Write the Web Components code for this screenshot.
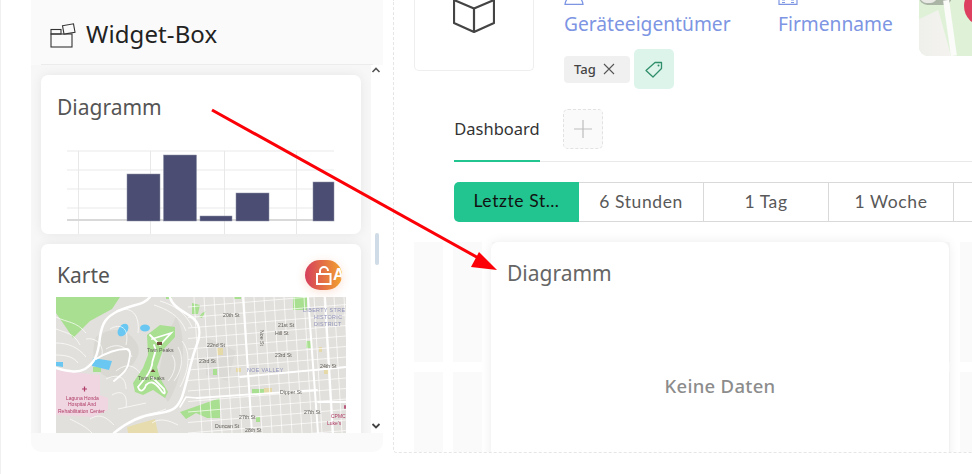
<!DOCTYPE html>
<html lang="de"><head><meta charset="utf-8"><title>Widget-Box</title>
<style>html,body{margin:0;padding:0;background:#fff;overflow:hidden}</style></head>
<body>
<app-shell>
  <widget-sidebar>
    <widget-card heading="Diagramm"><bar-chart></bar-chart></widget-card>
    <widget-card heading="Karte" locked><street-map></street-map></widget-card>
  </widget-sidebar>
  <dash-main></dash-main>
</app-shell>
<script>
const UB='"Noto Sans","Open Sans",sans-serif';
function def(name,html,extra){
  customElements.define(name,class extends HTMLElement{
    constructor(){super();this.attachShadow({mode:'open'}).innerHTML=typeof html==='function'?html(this):html;}
    connectedCallback(){if(extra)extra(this)}
  });
}
def('app-shell',`<style>
:host{display:flex;position:relative;width:972px;height:474px;overflow:hidden;box-sizing:border-box;border-left:1px solid #f0f0f0;padding-left:30px;background:#fff;font-family:${UB}}
svg{position:absolute;left:-1px;top:0;pointer-events:none;z-index:5}
</style><slot></slot>
<svg width="972" height="474" viewBox="0 0 972 474"><path d="M212 110L482 260" stroke="#fb0007" stroke-width="3" fill="none"/><path d="M497 270L479 252L471 267Z" fill="#fb0007"/></svg>`);

def('widget-sidebar',`<style>
:host{display:flex;flex-direction:column;width:352px;height:452px;background:#fafafa;border-radius:0 0 10px 10px;overflow:hidden;flex:none}
header{margin:0 10px;width:323px;height:61px;box-sizing:content-box;border-bottom:1px solid #ececec;display:flex;align-items:center;gap:10px;padding:3px 0 0 9px;font-size:24px;letter-spacing:.1px;color:#222;flex:none}
header svg{margin-top:3px}
.body{display:flex;height:368px;flex:none}
.list{width:340px;overflow:hidden;box-sizing:border-box;padding:10px 10px 0;display:flex;flex-direction:column;gap:10px;background:#f7f7f7}
.bar{width:12px;background:#fff;display:flex;flex-direction:column;align-items:center;position:relative;justify-content:space-between;padding:2px 2px 4px 0;box-sizing:border-box}
.thumb{position:absolute;left:4px;top:168px;width:4px;height:32px;border-radius:2px;background:#cfdbe6}
.f{height:20px}
svg{display:block}
</style>
<header><svg width="26" height="25" viewBox="0 0 26 25" fill="none" stroke="#333" stroke-width="1.1"><rect x="1" y="11" width="21" height="13"/><rect x="1" y="6.5" width="10" height="4.5"/><path d="M12.5 2.7L23.5 .8L25 9.2L14 11Z" fill="#fafafa"/></svg><span>Widget-Box</span></header>
<div class="body"><div class="list"><slot></slot></div><div class="bar">
<svg width="10" height="6" viewBox="0 0 10 6"><path d="M1.5 5L5 1.5L8.500 5" fill="none" stroke="#555" stroke-width="1.600"/></svg><div class="thumb"></div>
<svg width="10" height="6" viewBox="0 0 10 6"><path d="M1.500 1L5 4.500L8.500 1" fill="none" stroke="#444" stroke-width="1.800"/></svg></div></div><div class="f"></div>`);

def('widget-card',el=>`<style>
:host{display:block;width:320px;height:159px;flex:none;background:#fff;border-radius:7px;box-shadow:0 0 12px rgba(0,0,0,.07);position:relative;box-sizing:border-box}
:host([locked]){height:220px}
h3{margin:0;padding:19px 0 0 16px;font-weight:400;font-size:21px;line-height:27px;height:27px;color:#555;box-sizing:content-box}
:host([locked]) h3{padding-top:18px}
.content{position:absolute;left:0;right:0;top:0;bottom:0;overflow:hidden;border-radius:7px;pointer-events:none}
.badge{position:absolute;left:264px;top:16px;width:37px;height:30px;border-radius:15px;background:linear-gradient(90deg,#d63f5c,#f2a32e);box-shadow:0 2px 10px rgba(240,120,60,.22);overflow:hidden;color:#fff;display:flex;align-items:center;z-index:2}
.badge svg{margin-left:11px;flex:none}
.badge b{font:700 16px "Liberation Sans",sans-serif;margin-left:1px;white-space:nowrap}
</style><h3>${el.getAttribute('heading')}</h3><div class="content"><slot></slot></div>
${el.hasAttribute('locked')?`<div class="badge"><svg width="16" height="19" viewBox="0 0 16 19" fill="none" stroke="#fff" stroke-width="2"><rect x="1" y="8" width="13.500" height="10"/><path d="M4 8V5a4 4 0 0 1 8 0"/></svg><b>A</b></div>`:''}`);

def('bar-chart',`<style>:host{display:block;position:absolute;left:0;top:0}svg{display:block}</style>
<svg width="320" height="159" viewBox="41 75 320 159">
<g stroke="#f4f4f4" stroke-width="2"><path d="M67 151H334M67 170H334M67 189H334M67 208H334"/></g>
<g stroke="#e8e8e8"><path d="M78.500 151V234M150.500 151V234M224.500 151V234M296.500 151V234"/></g>
<path d="M67 220H334" stroke="#d9d9d9" stroke-width="2"/>
<g fill="#4b4e72" stroke="#8d8fa8" stroke-width=".5"><rect x="127" y="174" width="33" height="47"/><rect x="163.500" y="155" width="33" height="66"/><rect x="200" y="216" width="32" height="5"/><rect x="236" y="193" width="33" height="28"/><rect x="313" y="182" width="21" height="39"/></g></svg>`);

def('street-map',el=>{
 let g='';
 for(let i=0;i<16;i++){const x=138+i*10;g+=`<path d="M${x} 0L${x+8} 136"/>`;}
 for(let i=0;i<14;i++){const y=5+i*10.5;g+=`<path d="M132 ${y+5}L290 ${y-8}"/>`;}
 const contours=['M0 20C12 26 20 24 30 36','M0 32C10 36 18 36 24 48','M0 46C12 46 22 50 30 60','M0 58C10 58 18 60 22 66','M30 42C40 40 48 48 46 58','M60 14C76 8 84 18 82 36','M54 32C64 26 74 30 70 48','M50 52C60 46 70 48 76 60','M60 74C70 66 78 68 84 76','M50 82C62 76 70 80 70 92','M56 98C66 92 72 98 70 110','M62 112L90 106','M34 122C44 116 50 120 58 128','M14 122C26 128 30 130 36 136','M98 8C110 12 124 18 130 34','M104 4C118 8 130 16 136 30','M122 50C128 60 126 74 118 84','M126 44C136 56 132 76 124 90','M116 58C122 66 118 78 112 84','M78 122C90 116 96 118 110 112','M96 126C104 120 114 124 122 128'].map(d=>`<path d="${d}"/>`).join('');
 return `<style>:host{display:block;position:absolute;left:15px;top:53px;width:290px;height:136px}
 svg{display:block;filter:blur(.4px)}text{font-family:"Liberation Sans",sans-serif;font-size:5.200px;fill:#5f5c56}.b{fill:#8f92bb;font-size:5.400px;letter-spacing:.35px}.r{fill:#b03a66;font-size:5px}</style>
 <svg width="290" height="136" viewBox="0 0 290 136">
 <rect width="290" height="136" fill="#e2e0dc"/>
 <path d="M40 40C55 30 70 30 80 45S70 75 60 80S30 70 40 40Z" fill="#d6d4cf" opacity=".7"/><path d="M120 20C132 40 128 80 112 105L100 90L110 40Z" fill="#d6d4cf" opacity=".7"/><path d="M150 40l30 14l-8 30l-22-6Z" fill="#dcdad6"/>
 <path d="M0 0H64L56 12L34 24L17 41L11 32L0 16Z" fill="#a9df90"/>
 <path d="M136 6L144 8L142 17L136 17ZM146 16L150 14L146 21L143 20ZM110 0H116V2H110ZM178 0H185V2H178Z" fill="#a9df90"/>
 <path d="M237 0H251V13H237ZM100 40Z" fill="#a9df90"/>
 <path d="M0 73L44 78V98L52 101V113L37 120L0 118Z" fill="#efd6e0"/>
 <path d="M91 38L104 28L119 30L119 40L107 53L101 70L104 81L112 95L109 101L97 93L87 98L79 95L77 86L87 71L92 58Z" fill="#a9df90"/>
 <path d="M124 115L164 101V121H151L140 116L130 122Z" fill="#a9df90"/>
 <path d="M71 130L99 122L102 136H72Z" fill="#e6dcae"/>
 <g fill="#a9df90"><rect x="157" y="72" width="4" height="6"/><rect x="196" y="92" width="12" height="5"/><rect x="250" y="44" width="5" height="7"/><rect x="200" y="120" width="4" height="5"/><rect x="37" y="70" width="8" height="5"/></g>
 <g fill="#e6d9a8"><rect x="161" y="51" width="6" height="7"/><rect x="208" y="91" width="8" height="5"/><rect x="263" y="50" width="3" height="5"/><rect x="180" y="71" width="5" height="4"/><rect x="268" y="72" width="5" height="5"/></g>
 <ellipse cx="67" cy="33" rx="7" ry="4.500" transform="rotate(-55 67 33)" fill="#69c7f2"/><ellipse cx="89" cy="31" rx="5" ry="3.500" fill="#69c7f2"/>
 <path d="M37 61L56 64L53 73L36 69ZM0 65H7V70L0 69Z" fill="#69c7f2"/>
 <g fill="none" stroke="#fff" stroke-width=".7">${g}${contours}</g>
 <g fill="none" stroke="#fff" stroke-linecap="round">
 <path stroke-width="2.500" d="M0 71C14 75 22 76 29 72C38 66 42 60 44 40C46 26 50 20 62 14C78 7 88 8 94 0"/>
 <path stroke-width="2.500" d="M114 0C116 10 128 14 138 22C146 30 144 40 140 50C134 66 132 82 126 100C122 110 118 114 104 116C88 118 72 124 58 136"/>
 <path stroke-width="1.800" d="M40 62C50 56 60 52 70 52C76 52 74 60 72 68C70 76 62 80 58 84"/>
 <path stroke-width="1.800" d="M96 42L115 36L104 48L94 38M98 48C102 56 96 60 96 68C94 76 90 80 82 90C84 96 88 94 90 88C94 84 98 84 104 92C108 98 110 98 108 92L96 80"/>
 <path stroke-width="2" d="M187 0L196 136M252 0L262 136M269 0L277 136"/>
 <path stroke-width="1.800" d="M141 101L261 93M184 80L290 70M262 105H290"/>
 <path stroke-width="1.500" d="M124 110L130 100L141 101"/>
 </g>
 <g><text x="167" y="20">20th St</text><text x="222" y="30">21st St</text><text x="219" y="38">Hill St</text><text x="151" y="50">22nd St</text><text x="143" y="66">23rd St</text><text x="219" y="60">23rd St</text><text x="264" y="71">24th St</text><text x="224" y="97">Dipper St</text><text x="248" y="117">27th St</text><text x="183" y="122">27th St</text><text x="159" y="131">Duncan St</text><text x="189" y="135">28th St</text><text x="91" y="55">Twin Peaks</text><text x="82" y="83">Twin Peaks</text>
 <text transform="translate(204 33) rotate(90)">Noe St</text>
 <text class="b" x="247" y="15">LIBERTY STRE</text><text class="b" x="258" y="22">HISTORIC</text><text class="b" x="258" y="29">DISTRICT</text><text class="b" x="191" y="75">NOE VALLEY</text>
 <text class="r" x="10" y="103">Laguna Honda</text><text class="r" x="12" y="109">Hospital And</text><text class="r" x="2" y="116">Rehabilitation Center</text><text class="r" x="275" y="121">CPMC</text><text class="r" x="271" y="128">Luke's</text>
 <path d="M26 92H31M28.500 89.500V94.500M288 110H290M289 108V112" stroke="#b03a66" stroke-width="1.200"/><path d="M101 45h5v3h-5zM94.500 75h5l-2.500-3z" fill="#6b4a3a"/></g>
 </svg>`;});

def('dash-main',`<style>
:host{display:block;flex:none;width:590px;height:453px;margin-left:10px;box-sizing:border-box;border:1px dashed #e6e6e6;border-top:0;border-right:0;border-radius:0 0 0 4px;overflow:hidden;position:relative;font-family:${UB}}
.top{display:flex;height:89px}
.tile{width:120px;height:71px;margin-left:20px;box-sizing:border-box;border:1px solid #eee;border-top:0;border-radius:0 0 5px 5px;display:flex;justify-content:center;align-items:flex-start;flex:none}
.tile svg{display:block}
.info{width:355px;margin-left:30px;flex:none}
.links{height:49px;display:flex;flex-direction:column}
.lk{display:flex;height:5px}
.lk svg{display:block;flex:none}
.nm{display:flex;color:#7d95e3;font-size:19.200px;line-height:28px;margin-top:5px}
.nm span{display:block;white-space:nowrap}
.tags{display:flex;align-items:center;gap:4px;height:40px}
.chip{width:66px;height:27px;box-sizing:border-box;background:#f0f0f0;border-radius:4px;display:flex;align-items:center;padding-left:10px;gap:7px;font-size:13px;font-weight:500;color:#444}
.tagb{width:40px;height:40px;background:#dcf4ea;border-radius:5px;display:flex;align-items:center;justify-content:center}
.thumb{width:100px;height:56px;border-radius:0 0 0 9px;background:#dff2d8;position:relative;overflow:hidden;flex:none;margin-left:0}
.thumb i{position:absolute;display:block}
.tabs{margin:20px 0 0 60px;height:53px;box-sizing:border-box;display:flex;align-items:flex-start;gap:23px;border-bottom:1px solid #e9e9e9;position:relative}
.tab{width:86px;height:53px;box-sizing:border-box;border-bottom:2px solid #22c58f;font-size:16.500px;line-height:40px;color:#333;text-align:center;white-space:nowrap}
.add{width:40px;height:40px;box-sizing:border-box;border:1px dashed #e2e2e2;border-radius:5px;background:#fafafa;display:flex;align-items:center;justify-content:center}
.rng{margin:20px 0 0 60px;display:flex;height:40px}
.rng div{width:125px;height:40px;box-sizing:border-box;flex:none;border:1px solid #d9d9d9;border-left:0;text-align:center;font:400 17.500px/38px Lato,sans-serif;letter-spacing:.6px;color:#595959;white-space:nowrap}
.rng .on{background:#22c58f;color:#111;border:0;border-radius:5px 0 0 5px;line-height:38px}
.grid{margin:20px 0 0 20px;display:grid;grid-template-columns:repeat(15,29px);grid-template-rows:120px 120px;gap:10px;position:relative;height:211px}
.grid>i{background:#fafafa;display:block}
.card{position:absolute;left:77px;top:0;width:458px;height:240px;background:#fff;border-radius:7px;box-shadow:0 0 12px rgba(0,0,0,.08);color:#666}
.card h3{margin:0;font-weight:400;font-size:21px;line-height:28px;padding:17px 0 0 16px;color:#666}
.card p{position:absolute;left:0;right:0;top:132px;margin:0;text-align:center;font-size:18.500px;letter-spacing:.3px;line-height:24px;color:#8c8c8c;font-weight:500}
</style>
<div class="top">
 <div class="tile"><svg width="42" height="33" viewBox="0 0 42 33" fill="none" stroke="#444" stroke-width="2.200" stroke-linejoin="round"><path d="M1 -4V23L21 32L41 23V-4M1 0L21 8.500L41 0M21 8.500V32"/></svg></div>
 <div class="info">
  <div class="links"><div class="lk">
   <svg width="214" height="5" viewBox="0 0 214 5" fill="none" stroke="#7d95e3" stroke-width="1.300"><path d="M4.500 -4C3 0 1 1 1 4.400H19C19 1 17 0 15.500 -4"/></svg>
   <svg width="20" height="5" viewBox="0 0 20 5" fill="none" stroke="#7d95e3" stroke-width="1.200"><path d="M1 -2V4.400H19V-2M4 0H7M4 2.500H7M13 0H16M13 2.500H16M9 -2H11"/></svg>
   </div><div class="nm"><span style="width:214px">Geräteeigentümer</span><span>Firmenname</span></div></div>
  <div class="tags"><div class="chip"><span>Tag</span><svg width="12" height="12" viewBox="0 0 12 12" stroke="#555" stroke-width="1.100"><path d="M1 1L11 11M11 1L1 11"/></svg></div>
  <div class="tagb"><svg width="18" height="17" viewBox="0 0 18 17" fill="none" stroke="#2f8f6a" stroke-width="1.300" stroke-linejoin="round"><path d="M10 1.500H16.500V7.500L8 16L1 9.500Z"/><circle cx="13.500" cy="4.500" r="1" fill="#2f8f6a" stroke="none"/></svg></div></div>
 </div>
 <div class="thumb"><i style="left:0;top:-12px;width:33px;height:17px;border-radius:9px;background:#aab5a5"></i><i style="left:1px;top:-10px;width:17px;height:13px;border-radius:8px;background:#e8e8e4"></i><i style="left:0;top:10px;width:32px;height:46px;background:linear-gradient(90deg,#efefec,#f4f3f0);clip-path:polygon(0 20%,60% 0,100% 100%,0 100%)"></i><i style="left:28px;top:0;width:6px;height:56px;background:#fbfbfa;transform:rotate(-8deg)"></i><i style="left:45px;top:-14px;width:40px;height:40px;border-radius:50%;background:#dd3f5e"></i></div>
</div>
<div class="tabs"><div class="tab">Dashboard</div><div class="add"><svg width="18" height="18" viewBox="0 0 18 18" stroke="#bdbdbd" stroke-width="1.200"><path d="M9 0V18M0 9H18"/></svg></div></div>
<div class="rng"><div class="on">Letzte St…</div><div>6 Stunden</div><div>1 Tag</div><div>1 Woche</div><div></div></div>
<div class="grid">${'<i></i>'.repeat(30)}<div class="card"><h3>Diagramm</h3><p>Keine Daten</p></div></div>`);
</script>
</body></html>
